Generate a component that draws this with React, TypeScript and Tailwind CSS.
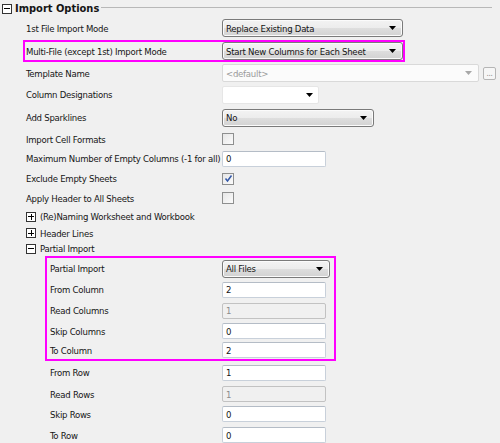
import React from "react";

const font = "font-['DejaVu_Sans_Condensed','Liberation_Sans',sans-serif]";

const Arrow: React.FC<{ gray?: boolean }> = ({ gray }) => (
  <svg width="7" height="4" viewBox="0 0 7 4" className="shrink-0">
    <path d="M0 0h7L3.5 4z" fill={gray ? "#a8a8a8" : "#000"} />
  </svg>
);

type ComboProps = { text?: string; w: string; kind?: "button" | "disabled" | "white" };

const Combo: React.FC<ComboProps> = ({ text = "", w, kind = "button" }) => {
  if (kind === "disabled")
    return (
      <div className={`${w} h-[18px] flex items-center justify-between pl-[3px] pr-[6px] bg-[#fbfbfb] border border-[#d9d9d9] rounded-[2px] text-[#9a9a9a]`}>
        <span className="whitespace-nowrap">{text}</span>
        <Arrow gray />
      </div>
    );
  if (kind === "white")
    return (
      <div className={`${w} h-[18px] flex items-center justify-end pr-[5px] bg-white border border-[#e6e6e6] rounded-[2px]`}>
        <Arrow />
      </div>
    );
  return (
    <div className={`${w} h-[18px] flex items-center justify-between pl-[3px] pr-[6px] border border-[#7a7a7a] rounded-[3px] bg-[linear-gradient(to_bottom,#f3f3f3_0%,#ececec_50%,#dedede_50%,#d2d2d2_100%)] shadow-[inset_0_0_0_1px_#fbfbfb]`}>
      <span className="whitespace-nowrap">{text}</span>
      <Arrow />
    </div>
  );
};

const TextBox: React.FC<{ value: string; w?: string; disabled?: boolean }> = ({ value, w = "w-[104px]", disabled }) =>
  disabled ? (
    <div className={`${w} h-[16px] flex items-center pl-[3px] border border-[#c2c2c2] rounded-[2px] bg-[#f0f0f0] text-[#8c8c8c]`}>
      {value}
    </div>
  ) : (
    <div className={`${w} h-[16px] flex items-center pl-[3px] border border-[#c8d0da] border-t-[#b4bcc6] rounded-[2px] bg-white`}>
      {value}
    </div>
  );

const CheckBox: React.FC<{ checked?: boolean }> = ({ checked }) => (
  <div className="w-[12px] h-[12px] border border-[#8e8f8f] bg-[linear-gradient(135deg,#e6e6e6,#fbfbfb)] flex items-center justify-center">
    {checked && (
      <svg width="9" height="9" viewBox="0 0 9 9">
        <path d="M1.5 4.5L3.5 7L7.5 1.5" fill="none" stroke="#3358a8" strokeWidth="1.5" />
      </svg>
    )}
  </div>
);

const Toggle: React.FC<{ plus?: boolean }> = ({ plus }) => (
  <div className="relative w-[10px] h-[10px] border border-[#333] bg-white shrink-0">
    <div className="absolute left-[1px] right-[1px] top-[3.5px] h-px bg-black" />
    {plus && <div className="absolute top-[1px] bottom-[1px] left-[3.5px] w-px bg-black" />}
  </div>
);

type RowProps = { label: string; h: string; lw?: string; pl?: string; children?: React.ReactNode };

const Row: React.FC<RowProps> = ({ label, h, lw = "w-[196px]", pl = "pl-[26px]", children }) => (
  <div className={`flex items-center ${h} ${pl}`}>
    <div className={`${lw} shrink-0 whitespace-nowrap`}>{label}</div>
    {children}
  </div>
);

const TreeRow: React.FC<{ label: string; h: string; plus?: boolean }> = ({ label, h, plus }) => (
  <div className={`flex items-center ${h} pl-[26px] gap-[4px]`}>
    <Toggle plus={plus} />
    <span className="whitespace-nowrap">{label}</span>
  </div>
);

export default function App() {
  return (
    <div className={`w-[500px] h-[443px] overflow-hidden bg-[#f0f0f0] text-[9.5px] tracking-[-0.25px] leading-[13px] text-[#151515] ${font}`}>
      {/* Section header */}
      <div className="flex items-center h-[17px] pl-[2px]">
        <Toggle />
        <span className="ml-[3px] font-bold text-[11px] tracking-normal whitespace-nowrap">Import Options</span>
        <div className="flex-1 h-px bg-[#b8b8b8] ml-[2px] mr-[8px] -mt-[2px]" />
      </div>

      <Row label="1st File Import Mode" h="h-[22px]">
        <Combo text="Replace Existing Data" w="w-[181px]" />
      </Row>

      <div className="ml-[23px] mt-[1px] w-[382px] h-[22px] border-2 border-[#ff00ff] flex items-center pl-[1px]">
        <div className="w-[196px] shrink-0 whitespace-nowrap">Multi-File (except 1st) Import Mode</div>
        <Combo text="Start New Columns for Each Sheet" w="w-[181px]" />
      </div>

      <Row label="Template Name" h="h-[22px]">
        <Combo text="<default>" w="w-[257px]" kind="disabled" />
        <div className="ml-[4px] w-[13px] h-[13px] border border-[#b5b5b5] rounded-[2px] bg-[#f6f6f6] flex items-end justify-center text-[8px] leading-[8px] text-[#888] pb-[1px]">
          ...
        </div>
      </Row>

      <Row label="Column Designations" h="h-[21px]">
        <Combo w="w-[97px]" kind="white" />
      </Row>

      <Row label="Add Sparklines" h="h-[25px]">
        <Combo text="No" w="w-[152px]" />
      </Row>

      <Row label="Import Cell Formats" h="h-[18px]">
        <CheckBox />
      </Row>

      <Row label="Maximum Number of Empty Columns (-1 for all)" h="h-[21px]">
        <TextBox value="0" />
      </Row>

      <Row label="Exclude Empty Sheets" h="h-[19px]">
        <CheckBox checked />
      </Row>

      <Row label="Apply Header to All Sheets" h="h-[20px]">
        <CheckBox />
      </Row>

      <TreeRow label="(Re)Naming Worksheet and Workbook" h="h-[17px]" plus />
      <TreeRow label="Header Lines" h="h-[16px]" plus />
      <TreeRow label="Partial Import" h="h-[15px]" />

      {/* Highlighted partial import block */}
      <div className="ml-[45px] w-[291px] h-[105px] border-2 border-[#ff00ff] flex flex-col">
        <Row label="Partial Import" h="h-[21px]" pl="pl-[3px]" lw="w-[172px]">
          <Combo text="All Files" w="w-[108px]" />
        </Row>
        <Row label="From Column" h="h-[21px]" pl="pl-[3px]" lw="w-[172px]">
          <TextBox value="2" />
        </Row>
        <Row label="Read Columns" h="h-[21px]" pl="pl-[3px]" lw="w-[172px]">
          <TextBox value="1" disabled />
        </Row>
        <Row label="Skip Columns" h="h-[20px]" pl="pl-[3px]" lw="w-[172px]">
          <TextBox value="0" />
        </Row>
        <Row label="To Column" h="h-[18px]" pl="pl-[3px]" lw="w-[172px]">
          <TextBox value="2" />
        </Row>
      </div>

      <Row label="From Row" h="h-[23px]" pl="pl-[50px]" lw="w-[172px]">
        <TextBox value="1" />
      </Row>
      <Row label="Read Rows" h="h-[20px]" pl="pl-[50px]" lw="w-[172px]">
        <TextBox value="1" disabled />
      </Row>
      <Row label="Skip Rows" h="h-[20px]" pl="pl-[50px]" lw="w-[172px]">
        <TextBox value="0" />
      </Row>
      <Row label="To Row" h="h-[22px]" pl="pl-[50px]" lw="w-[172px]">
        <TextBox value="0" />
      </Row>
    </div>
  );
}
